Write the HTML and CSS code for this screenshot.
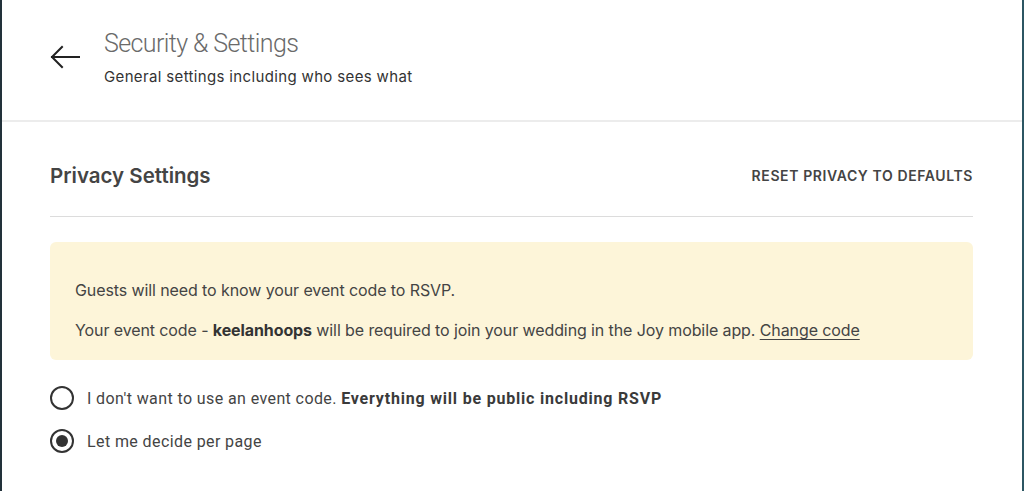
FILE: index.html
```html
<!DOCTYPE html>
<html lang="en">
<head>
<meta charset="utf-8">
<title>Security &amp; Settings</title>
<link rel="stylesheet" href="styles.css">
</head>
<body>
<div class="frame">
  <header class="page-header">
    <button class="back" aria-label="Back">
      <svg width="30" height="24" viewBox="0 0 30 24" fill="none" stroke="#222" stroke-width="2" stroke-linecap="square">
        <path d="M2 12 H29"/>
        <path d="M12 2 L2 12 L12 22"/>
      </svg>
    </button>
    <div class="titles">
      <h1 class="title">Security &amp; Settings</h1>
      <p class="subtitle">General settings including who sees what</p>
    </div>
  </header>
  <main class="content">
    <div class="section-head">
      <h2 class="section-title">Privacy Settings</h2>
      <a class="reset" href="#">RESET PRIVACY TO DEFAULTS</a>
    </div>
    <div class="notice">
      <p>Guests will need to know your event code to RSVP.</p>
      <p>Your event code - <strong>keelanhoops</strong> will be required to join your wedding in the Joy mobile app. <a href="#" class="link">Change code</a></p>
    </div>
    <div class="options">
      <label class="option">
        <span class="radio"></span>
        <span class="label">I don't want to use an event code. <strong>Everything will be public including RSVP</strong></span>
      </label>
      <label class="option">
        <span class="radio checked"></span>
        <span class="label">Let me decide per page</span>
      </label>
    </div>
  </main>
</div>
</body>
</html>
```

FILE: styles.css
```css
* { box-sizing: border-box; }
html, body { margin: 0; padding: 0; background: #fff; }
body {
  font-family: "Inter", "Roboto", "Liberation Sans", sans-serif;
  color: #444;
}
.frame {
  height: 491px;
  border-left: 2px solid #22313a;
  border-right: 2px solid #2c5663;
  overflow: hidden;
}
.page-header {
  height: 122px;
  border-bottom: 2px solid #ececec;
  display: flex;
  align-items: flex-start;
  padding: 28px 0 0 48px;
}
.back {
  width: 30px;
  height: 24px;
  margin-top: 17px;
  padding: 0;
  border: 0;
  background: none;
  display: flex;
}
.titles { margin-left: 24px; }
.title {
  margin: 0;
  font-family: "Roboto", sans-serif;
  font-weight: 300;
  font-size: 25px;
  line-height: 32px;
  letter-spacing: -0.6px;
  color: #6a6a6a;
}
.subtitle {
  margin: 7px 0 0;
  font-size: 15px;
  line-height: 20px;
  letter-spacing: 0.35px;
  color: #333;
}
.content {
  padding: 0 49px 0 48px;
}
.section-head {
  height: 95px;
  display: flex;
  align-items: center;
  justify-content: space-between;
  padding-top: 13px;
  border-bottom: 1px solid #dcdcdc;
}
.section-title {
  margin: 0;
  font-size: 20.5px;
  font-weight: 600;
  color: #444;
}
.reset {
  font-size: 14px;
  font-weight: 600;
  letter-spacing: 0.6px;
  color: #444;
  text-decoration: none;
}
.notice {
  margin-top: 25px;
  background: #fdf5d9;
  border-radius: 6px;
  padding: 38px 25px 20px;
  font-size: 16px;
  line-height: 20px;
  letter-spacing: -0.1px;
  color: #444;
}
.notice p { margin: 0 0 20px; }
.notice p:last-child { margin-bottom: 0; }
.notice strong { font-weight: 700; color: #333; }
.link { color: #444; text-decoration: underline; text-underline-offset: 3px; }
.options {
  padding-top: 26px;
  display: flex;
  flex-direction: column;
  gap: 19px;
}
.option {
  display: flex;
  align-items: center;
  gap: 13px;
  font-family: "Roboto", sans-serif;
  font-size: 16px;
  letter-spacing: 0.4px;
  color: #444;
}
.option strong { font-weight: 700; color: #3a3a3a; letter-spacing: 0.8px; }
.radio {
  width: 24px;
  height: 24px;
  border-radius: 50%;
  border: 2px solid #333;
  flex: none;
  display: flex;
  align-items: center;
  justify-content: center;
}
.radio.checked::after {
  content: "";
  width: 12px;
  height: 12px;
  border-radius: 50%;
  background: #333;
}
```
